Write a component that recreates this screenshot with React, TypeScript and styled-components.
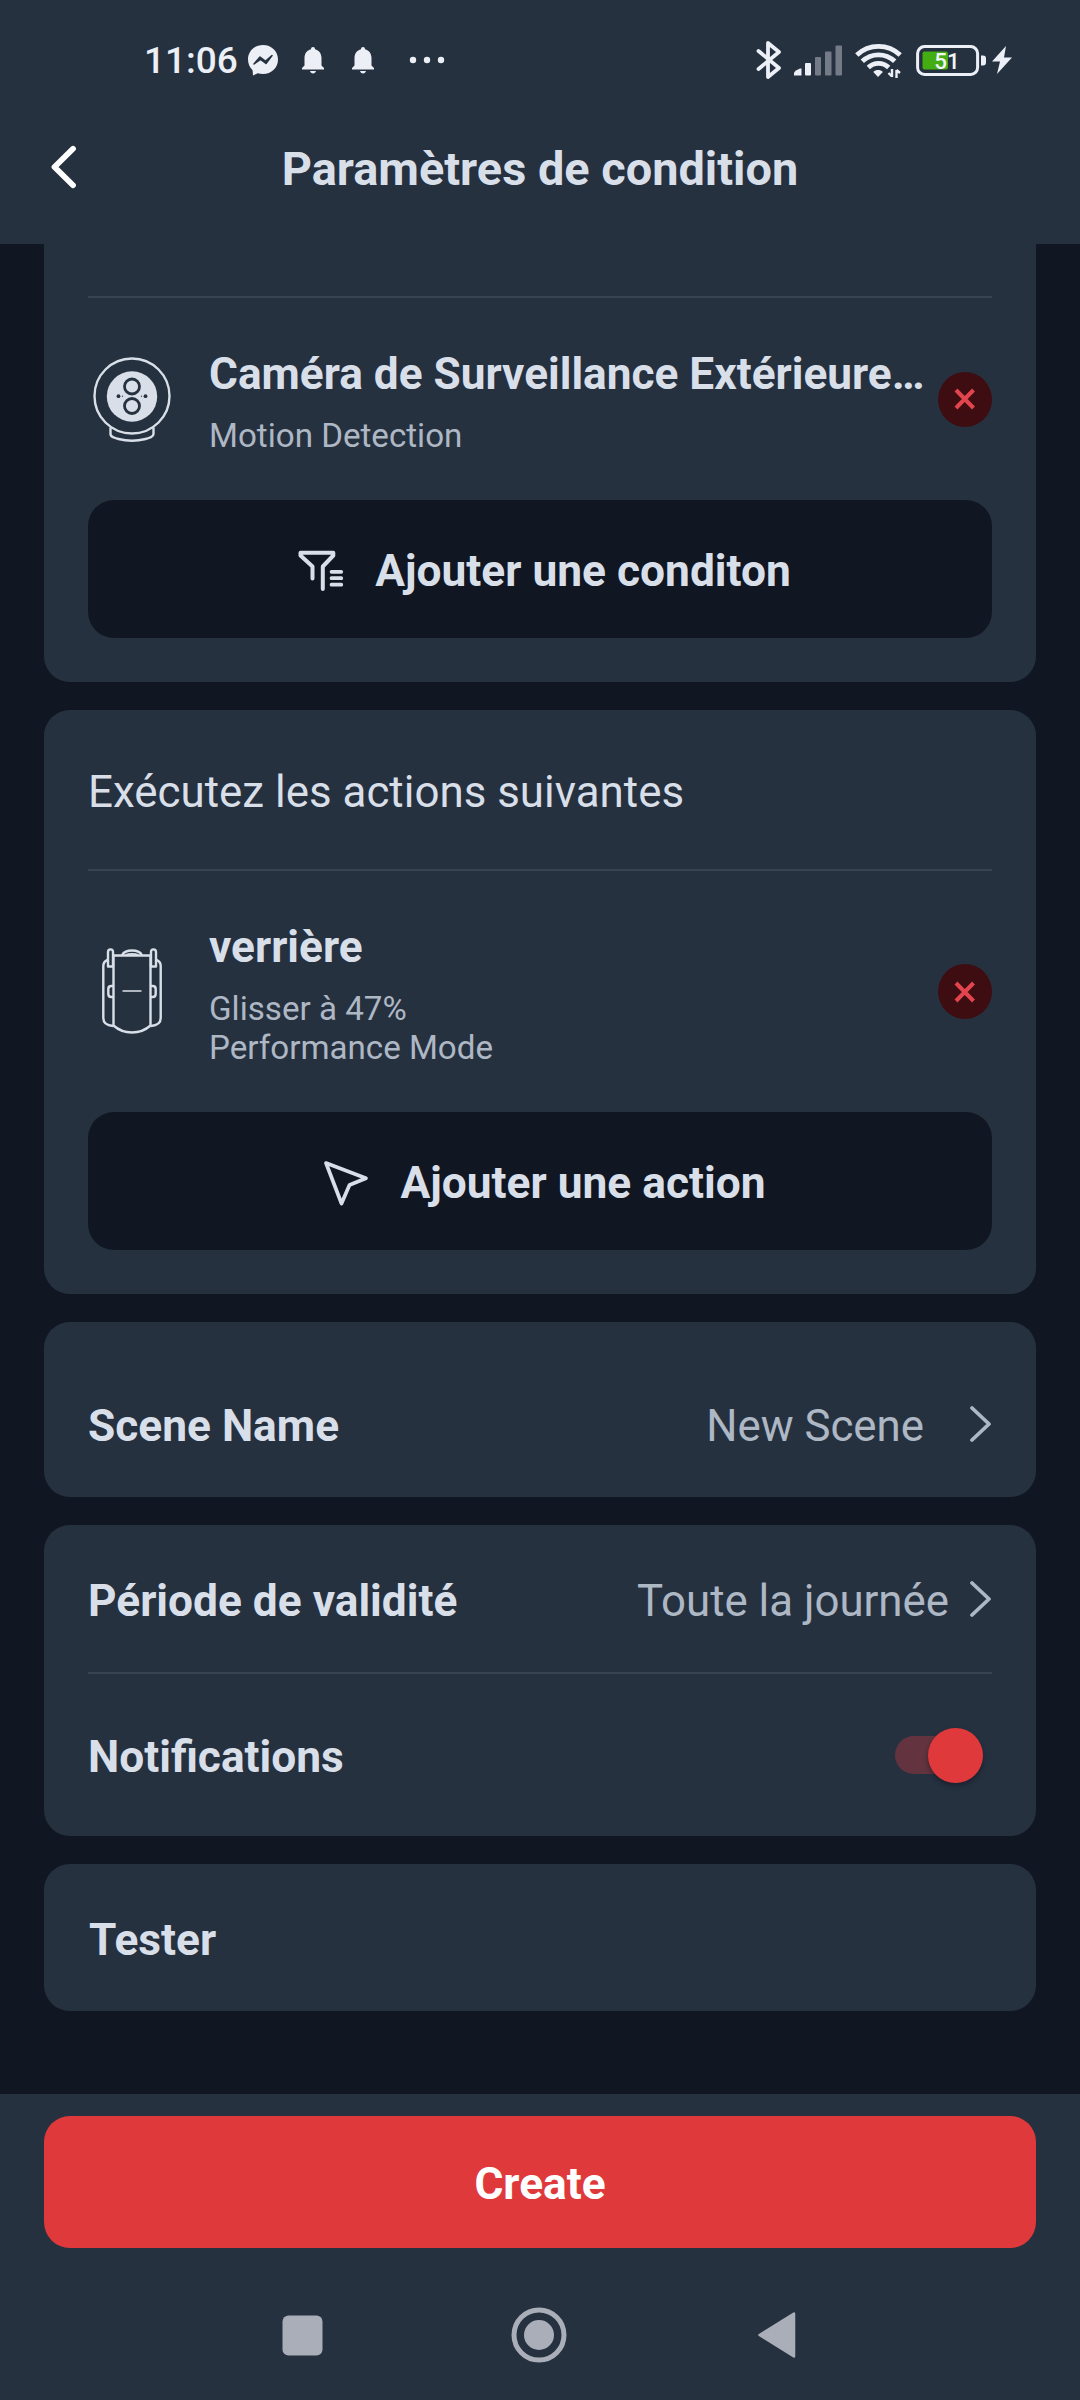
import React, { useState } from "react";
import styled, { createGlobalStyle } from "styled-components";

const color = {
  page: "#111722",
  panel: "#263140",
  line: "#384453",
  text: "#d8dfe8",
  muted: "#aeb7c4",
  red: "#e0393b",
  nav: "#a9aeb8",
};

const GlobalStyle = createGlobalStyle`
  *, *::before, *::after { box-sizing: border-box; }
  body { margin: 0; background: ${color.page}; }
  button { border: 0; padding: 0; background: none; font: inherit; color: inherit; }
`;

const Screen = styled.div`
  width: 1080px;
  height: 2400px;
  overflow: hidden;
  display: flex;
  flex-direction: column;
  background: ${color.page};
  color: ${color.text};
  font-family: Roboto, "Liberation Sans", sans-serif;
  font-size: 43.9px;
  line-height: 52px;
  svg { display: block; flex: none; }
`;

const StatusBar = styled.div`
  height: 120px;
  flex: none;
  padding: 0 68px 0 144px;
  display: flex;
  justify-content: space-between;
  align-items: center;
  background: ${color.panel};
  color: #eceff6;
`;

const StatusGroup = styled.div`
  display: flex;
  align-items: center;
`;

const Clock = styled.span`
  width: 104px;
  font-size: 37px;
  font-weight: 500;
  line-height: 44px;
  padding-top: 2px;
  white-space: nowrap;
`;

const Header = styled.header`
  height: 124px;
  flex: none;
  display: grid;
  grid-template-columns: 100px 1fr 100px;
  padding: 0 24px;
  background: ${color.panel};
`;

const BackButton = styled.button`
  height: 94px;
  display: flex;
  align-items: center;
  padding-left: 25px;
`;

const Title = styled.h1`
  margin: 0;
  padding-top: 22px;
  font-size: 46.9px;
  line-height: 54px;
  font-weight: 700;
  text-align: center;
  white-space: nowrap;
`;

const Content = styled.main`
  flex: 1;
  min-height: 0;
  padding: 0 44px;
  display: flex;
  flex-direction: column;
  gap: 28px;
`;

const Card = styled.section<{ $top?: number; $bottom?: number; $flush?: boolean }>`
  flex: none;
  padding: ${(p) => p.$top ?? 0}px 44px ${(p) => p.$bottom ?? 0}px;
  border-radius: ${(p) => (p.$flush ? "0 0 26px 26px" : "26px")};
  background: ${color.panel};
`;

const Divider = styled.hr`
  height: 2px;
  margin: 0;
  border: 0;
  background: ${color.line};
`;

const SectionTitle = styled.h2`
  margin: 0;
  height: 159px;
  padding-top: 56px;
  font-size: inherit;
  font-weight: 400;
`;

const DeviceRow = styled.div`
  display: grid;
  grid-template-columns: 88px 1fr 54px;
  column-gap: 33px;
  align-items: center;
  padding: 46px 0 45px;
`;

const DeviceIcon = styled.div`
  display: flex;
  justify-content: center;
`;

const DeviceText = styled.div`
  padding-top: 4px;
  margin-right: -25px;
  min-width: 0;
`;

const DeviceName = styled.div`
  font-size: 44.2px;
  font-weight: 700;
  overflow: hidden;
  white-space: nowrap;
  text-overflow: ellipsis;
`;

const DeviceDetail = styled.div`
  margin-top: 16px;
  font-size: 33.15px;
  line-height: 39px;
  color: ${color.muted};
  white-space: pre-line;
`;

const RemoveButton = styled.button`
  width: 54px;
  height: 55px;
  border-radius: 50%;
  display: flex;
  align-items: center;
  justify-content: center;
  background: #3d0d11;
  margin-top: -1px;
`;

const AddButton = styled.button`
  width: 100%;
  height: 138px;
  padding-left: 9px;
  border-radius: 26px;
  display: flex;
  align-items: center;
  justify-content: center;
  gap: 31px;
  background: ${color.page};
  font-size: 44.3px;
  font-weight: 700;
  white-space: nowrap;
  svg { margin-top: 4px; }
`;

const AddLabel = styled.span`
  padding-top: 3px;
`;

const SettingRow = styled.div<{ $height: number; $shift?: number }>`
  height: ${(p) => p.$height}px;
  padding-top: ${(p) => p.$shift ?? 5}px;
  display: flex;
  align-items: center;
  justify-content: space-between;
  white-space: nowrap;
`;

const SettingLabel = styled.span<{ $indent?: number }>`
  padding-left: ${(p) => p.$indent ?? 0}px;
  font-size: 44.25px;
  font-weight: 700;
`;

const SettingValue = styled.span<{ $gap: number }>`
  display: flex;
  align-items: center;
  gap: ${(p) => p.$gap}px;
  font-size: 43.8px;
  color: ${color.muted};
  svg { margin-top: -5px; }
`;

const Toggle = styled.button<{ $on: boolean }>`
  width: 88px;
  height: 38px;
  margin: -3px 9px 0 0;
  border-radius: 19px;
  display: flex;
  align-items: center;
  justify-content: ${(p) => (p.$on ? "flex-end" : "flex-start")};
  background: ${(p) => (p.$on ? "#63343f" : "#46505e")};
`;

const Thumb = styled.span<{ $on: boolean }>`
  width: 55px;
  height: 55px;
  flex: none;
  border-radius: 50%;
  background: ${(p) => (p.$on ? color.red : "#b8bfca")};
  box-shadow: 0 3px 5px rgba(10, 14, 24, 0.45);
`;

const Footer = styled.footer`
  height: 306px;
  flex: none;
  padding: 22px 44px 0;
  background: ${color.panel};
`;

const CreateButton = styled.button`
  width: 100%;
  height: 132px;
  padding-top: 3px;
  border-radius: 26px;
  background: ${color.red};
  color: #fff;
  font-size: 44.25px;
  font-weight: 700;
`;

const NavBar = styled.nav`
  height: 152px;
  padding: 22px 240px 0 238px;
  display: grid;
  grid-template-columns: 1fr auto 1fr;
  align-items: center;
  justify-items: start;
  svg:last-child { justify-self: end; }
`;

const MessengerIcon = () => (
  <svg width="30" height="31" viewBox="0 0 30 31">
    <path d="M15 0C6.5 0 0 6.200 0 14.500c0 4.300 1.800 8.100 4.600 10.700L5 30.500l4.700-2.200c1.700.5 3.500.7 5.300.7 8.500 0 15-6.200 15-14.500S23.500 0 15 0Z" fill="#eceff6" />
    <path d="m6 19 6-7 5.300 4.200L24 10.500l-6 8-5.500-4.200Z" fill={color.panel} stroke={color.panel} strokeWidth="1.500" strokeLinejoin="round" />
  </svg>
);

const BellIcon = () => (
  <svg width="22" height="27" viewBox="0 0 22 27">
    <path d="M11 0c1.400 0 2 .8 2 2.200 4 1 6.500 4.300 6.500 8.800v7.500L22 21v1.500H0V21l2.500-2.500V11C2.500 6.500 5 3.200 9 2.200 9 .8 9.600 0 11 0Z" fill="#eceff6" />
    <path d="M8 24h6c-.4 1.600-1.400 2.500-3 2.500S8.400 25.600 8 24Z" fill="#eceff6" />
  </svg>
);

const MoreIcon = () => (
  <svg width="36" height="8" viewBox="0 0 36 8" fill="#eceff6">
    <circle cx="4" cy="4" r="3.200" />
    <circle cx="18" cy="4" r="3.200" />
    <circle cx="32" cy="4" r="3.200" />
  </svg>
);

const BluetoothIcon = () => (
  <svg width="26" height="40" viewBox="0 0 26 40" fill="none" stroke="#eceff6" strokeWidth="3.800" strokeLinejoin="round" strokeLinecap="round">
    <path d="M2.500 11 23 28 12 37V3l11 9L2.500 29" />
  </svg>
);

const SignalIcon = () => (
  <svg width="49" height="31" viewBox="0 0 49 31">
    <path d="M2 25.500 6 23.500h1.500v7H0v-3Z" fill="#eceff6" />
    <rect x="11" y="18" width="6" height="12.500" rx="1" fill="#eceff6" />
    <rect x="21" y="12" width="6" height="18.500" rx="1" fill="#747b87" />
    <rect x="31" y="6.500" width="6.500" height="24" rx="1" fill="#747b87" />
    <rect x="41.500" y="0.500" width="6.500" height="30" rx="1" fill="#747b87" />
  </svg>
);

const WifiIcon = () => (
  <svg width="47" height="36" viewBox="0 0 47 36" fill="none" stroke="#eceff6" strokeWidth="4.800">
    <path d="M1.800 13C14 1.500 33 1.500 45.200 13" />
    <path d="M7.300 19.300c9.200-8.700 23.200-8.700 32.400 0" />
    <path d="M13.300 25.500c5.800-5.400 14.600-5.400 20.400 0" />
    <path d="M18.300 30c2.600-2.600 7-2.600 9.600 0L23 35Z" fill="#eceff6" stroke="none" />
    <path d="M37 27v8M33.500 31l3.500 3.500M41.500 36v-8M41.500 28l3.500 3" strokeWidth="2.400" />
  </svg>
);

/* Fill width follows the charge level shown inside the cell. */
const BatteryIcon = ({ level }: { level: number }) => (
  <svg width="71" height="31" viewBox="0 0 71 31">
    <rect x="1.600" y="1.600" width="60" height="27.800" rx="7" fill="none" stroke="#eceff6" strokeWidth="3" />
    <rect x="6.500" y="6.500" width={50 * (level / 100)} height="18" rx="2" fill="#43ad12" />
    <path d="M65 10.500h2c2 0 3 1 3 3v4c0 2-1 3-3 3h-2Z" fill="#eceff6" />
    <text x="31" y="23.800" textAnchor="middle" fontFamily="Roboto, sans-serif" fontSize="22.500" fontWeight="500" fill="#f2f5fa">{level}</text>
  </svg>
);

const BoltIcon = () => (
  <svg width="20" height="28" viewBox="0 0 20 28">
    <path d="M14 0 0 15.500h8L5 28l15-16.500h-8Z" fill="#eceff6" />
  </svg>
);

const BackIcon = () => (
  <svg width="30" height="44" viewBox="0 0 30 44" fill="none">
    <path d="M24 3.800 5.500 22 24 40.200" stroke="#fff" strokeWidth="5.800" strokeLinecap="round" strokeLinejoin="round" />
  </svg>
);

const CameraIcon = () => (
  <svg width="80" height="86" viewBox="0 0 80 86" fill="none" stroke={color.text} strokeWidth="2.400">
    <circle cx="40" cy="39" r="37.500" />
    <path d="M18.500 70.500v6.500c0 3 4 4 8 5 8 2 19 2 27 0 4-1 8-2 8-5v-6.500" />
    <circle cx="40" cy="39.500" r="25.200" fill={color.text} stroke="none" />
    <g stroke={color.panel} strokeWidth="2.800">
      <circle cx="40" cy="29.500" r="7.500" />
      <circle cx="40" cy="49" r="7.500" />
    </g>
    <g fill={color.panel} stroke="none">
      <circle cx="26.500" cy="39.200" r="1.900" />
      <circle cx="53.500" cy="39.200" r="1.900" />
      <circle cx="30.500" cy="39.200" r="0.600" />
      <circle cx="49.500" cy="39.200" r="0.600" />
    </g>
  </svg>
);

const MotorIcon = () => (
  <svg width="60" height="88" viewBox="0 0 60 88" fill="none" stroke={color.text} strokeWidth="2.400" strokeLinejoin="round">
    <path d="M11.500 7.500h37V77.500c-5 4.500-11 7-18.500 7s-13.500-2.500-18.500-7Z" />
    <path d="M20 7c2-3.300 5-4.500 10-4.500S38 3.700 40 7" />
    <path d="M24 6.800c3-1.300 9-1.300 12 0" strokeWidth="1.600" />
    <path d="M6 17V4c0-3.500 5-3.500 5 0v14.500H6Z" />
    <path d="M54 17V4c0-3.500-5-3.500-5 0v14.500h5Z" />
    <path d="M5.500 12C2.800 13 1.300 15 1.300 18v52c0 4.500 3.700 7.500 9.700 8" />
    <path d="M54.500 12c2.700 1 4.200 3 4.200 6v52c0 4.500-3.700 7.500-9.700 8" />
    <path d="M11.500 38H9.300c-2 0-3 1-3 3v5c0 2 1 3 3 3h2.200M48.500 38h2.200c2 0 3 1 3 3v5c0 2-1 3-3 3h-2.200" />
    <path d="M20.500 43h19" strokeWidth="1.800" opacity="0.850" />
  </svg>
);

const RemoveIcon = () => (
  <svg width="22" height="22" viewBox="0 0 22 22" fill="none">
    <path d="m2 2 17.500 18M19.500 2 2 20" stroke="#e2454d" strokeWidth="4" />
  </svg>
);

const FilterIcon = () => (
  <svg width="46" height="42" viewBox="0 0 46 42" fill="none" stroke={color.text} strokeWidth="4" strokeLinecap="round" strokeLinejoin="round">
    <path d="M14.500 28.500V16.500L2.500 5.500V2.800h32.800V5.500L24.800 16.500V39" />
    <path d="M33.500 21.800h9.800M33.500 28.200h9.800M33.500 34.700h9.800" strokeWidth="3.700" />
  </svg>
);

const SendIcon = () => (
  <svg width="46" height="46" viewBox="0 0 46 46" fill="none" stroke={color.text} strokeWidth="3.700" strokeLinejoin="round">
    <path d="M3 3 43 18.200 26.500 25 18.500 43.500Z" />
  </svg>
);

const ChevronIcon = () => (
  <svg width="22" height="38" viewBox="0 0 22 38" fill="none">
    <path d="m2 3 17 16L2 35" stroke={color.muted} strokeWidth="3.700" strokeLinecap="round" strokeLinejoin="round" />
  </svg>
);

const RecentsIcon = () => (
  <svg width="41" height="41" viewBox="0 0 41 41">
    <rect x="0.500" y="0.500" width="40" height="40" rx="6" fill={color.nav} />
  </svg>
);

const HomeIcon = () => (
  <svg width="56" height="56" viewBox="0 0 56 56">
    <circle cx="28" cy="28" r="25" fill="none" stroke={color.nav} strokeWidth="5" />
    <circle cx="28" cy="28" r="15" fill={color.nav} />
  </svg>
);

const NavBackIcon = () => (
  <svg width="38" height="48" viewBox="0 0 38 48">
    <path d="M36 2.500v43L1.500 24Z" fill={color.nav} stroke={color.nav} strokeWidth="2.500" strokeLinejoin="round" />
  </svg>
);

const StatusSlot = styled.span<{ $width: number }>`
  width: ${(p) => p.$width}px;
  flex: none;
`;

type DeviceProps = { icon: React.ReactNode; name: string; detail: string };

const Device = ({ icon, name, detail }: DeviceProps) => (
  <DeviceRow>
    <DeviceIcon>{icon}</DeviceIcon>
    <DeviceText>
      <DeviceName>{name}</DeviceName>
      <DeviceDetail>{detail}</DeviceDetail>
    </DeviceText>
    <RemoveButton aria-label="Supprimer">
      <RemoveIcon />
    </RemoveButton>
  </DeviceRow>
);

export default function App() {
  const [notify, setNotify] = useState(true);

  return (
    <Screen>
      <GlobalStyle />
      <StatusBar>
        <StatusGroup>
          <Clock>11:06</Clock>
          <StatusSlot $width={54}><MessengerIcon /></StatusSlot>
          <StatusSlot $width={50}><BellIcon /></StatusSlot>
          <StatusSlot $width={57}><BellIcon /></StatusSlot>
          <MoreIcon />
        </StatusGroup>
        <StatusGroup>
          <StatusSlot $width={38}><BluetoothIcon /></StatusSlot>
          <StatusSlot $width={61}><SignalIcon /></StatusSlot>
          <StatusSlot $width={61}><WifiIcon /></StatusSlot>
          <StatusSlot $width={76}><BatteryIcon level={51} /></StatusSlot>
          <BoltIcon />
        </StatusGroup>
      </StatusBar>

      <Header>
        <BackButton aria-label="Retour">
          <BackIcon />
        </BackButton>
        <Title>Paramètres de condition</Title>
      </Header>

      <Content>
        <Card $flush $top={52} $bottom={44}>
          <Divider />
          <Device icon={<CameraIcon />} name="Caméra de Surveillance Extérieure…" detail="Motion Detection" />
          <AddButton>
            <FilterIcon />
            <AddLabel>Ajouter une conditon</AddLabel>
          </AddButton>
        </Card>

        <Card $bottom={44}>
          <SectionTitle>Exécutez les actions suivantes</SectionTitle>
          <Divider />
          <Device icon={<MotorIcon />} name="verrière" detail={"Glisser à 47%\nPerformance Mode"} />
          <AddButton>
            <SendIcon />
            <AddLabel>Ajouter une action</AddLabel>
          </AddButton>
        </Card>

        <Card>
          <SettingRow $height={175} $shift={33}>
            <SettingLabel>Scene Name</SettingLabel>
            <SettingValue $gap={46}>
              New Scene
              <ChevronIcon />
            </SettingValue>
          </SettingRow>
        </Card>

        <Card>
          <SettingRow $height={147}>
            <SettingLabel>Période de validité</SettingLabel>
            <SettingValue $gap={21}>
              Toute la journée
              <ChevronIcon />
            </SettingValue>
          </SettingRow>
          <Divider />
          <SettingRow $height={162} $shift={3}>
            <SettingLabel>Notifications</SettingLabel>
            <Toggle $on={notify} role="switch" aria-checked={notify} aria-label="Notifications" onClick={() => setNotify(!notify)}>
              <Thumb $on={notify} />
            </Toggle>
          </SettingRow>
        </Card>

        <Card>
          <SettingRow $height={147}>
            <SettingLabel $indent={1}>Tester</SettingLabel>
          </SettingRow>
        </Card>
      </Content>

      <Footer>
        <CreateButton>Create</CreateButton>
        <NavBar>
          <RecentsIcon />
          <HomeIcon />
          <NavBackIcon />
        </NavBar>
      </Footer>
    </Screen>
  );
}
